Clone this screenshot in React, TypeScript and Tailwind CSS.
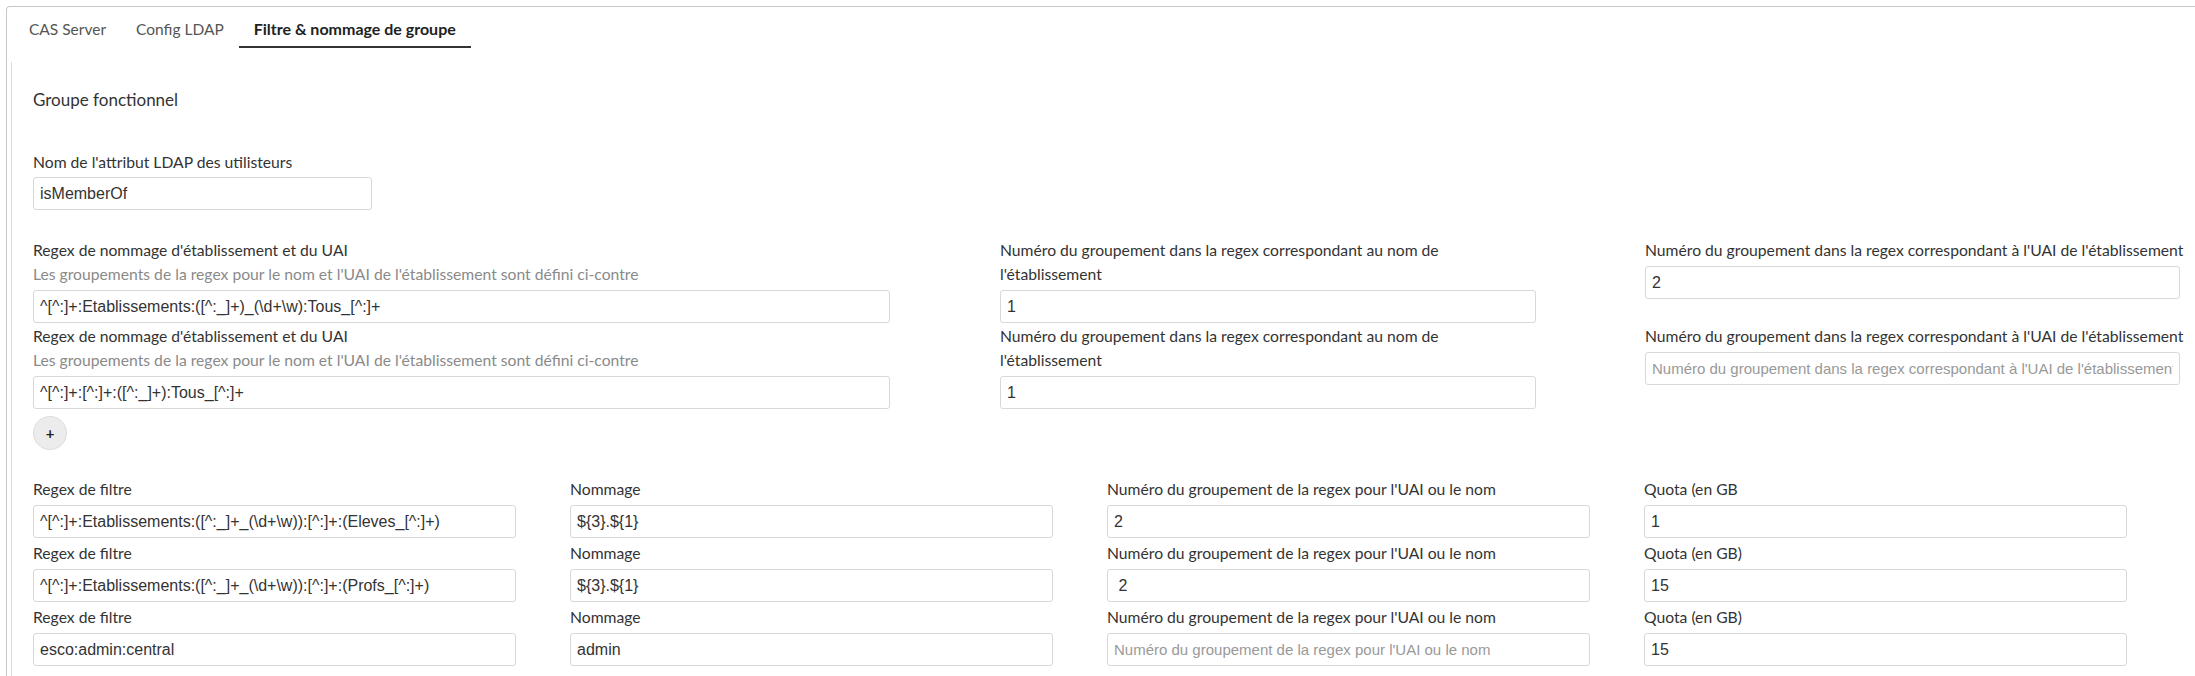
import React from "react";

const topRows = [
    {
        regex: "^[^:]+:Etablissements:([^:_]+)_(\\d+\\w):Tous_[^:]+",
        nameGroup: "1",
        uaiGroup: "2",
    },
    {
        regex: "^[^:]+:[^:]+:([^:_]+):Tous_[^:]+",
        nameGroup: "1",
        uaiGroup: "",
    },
];

const filterRows = [
    {
        filter: "^[^:]+:Etablissements:([^:_]+_(\\d+\\w)):[^:]+:(Eleves_[^:]+)",
        naming: "${3}.${1}",
        group: "2",
        quotaLabel: "Quota (en GB",
        quota: "1",
    },
    {
        filter: "^[^:]+:Etablissements:([^:_]+_(\\d+\\w)):[^:]+:(Profs_[^:]+)",
        naming: "${3}.${1}",
        group: " 2",
        quotaLabel: "Quota (en GB)",
        quota: "15",
    },
    {
        filter: "esco:admin:central",
        naming: "admin",
        group: "",
        quotaLabel: "Quota (en GB)",
        quota: "15",
    },
];

function TextInput({ value, placeholder }: { value?: string; placeholder?: string }) {
    return (
        <input
            type="text"
            defaultValue={value}
            placeholder={placeholder}
            className="block h-[33px] w-full rounded-[3px] border border-[#d8d8d8] bg-white px-[6px] font-['Liberation_Sans',Arial,sans-serif] text-[16px] text-[#333] placeholder:text-[15px] placeholder:text-[#999] outline-none"
        />
    );
}

function Label({ children }: { children: React.ReactNode }) {
    return <div className="leading-[24px] text-[15.7px] text-[#333]">{children}</div>;
}

export default function App() {
    const uaiLabel = "Numéro du groupement dans la regex correspondant à l'UAI de l'établissement";
    const groupLabel = "Numéro du groupement de la regex pour l'UAI ou le nom";

    return (
        <div className="flex min-h-screen flex-col bg-white pl-[6px] pt-[6px] font-['Lato',sans-serif]">
            <div className="flex flex-1 flex-col rounded-tl-[4px] border-l border-t border-[#c8c8c8]">
                {/* Tabs */}
                <div className="flex pl-[7px] pt-[10px] text-[15.5px] leading-[24px]">
                    <div className="px-[15px] pb-[6px] text-[#555]">CAS Server</div>
                    <div className="px-[15px] pb-[6px] text-[#555]">Config LDAP</div>
                    <div className="border-b-2 border-[#333] px-[15px] pb-[5px] text-[16px] font-bold text-[#222]">
                        Filtre &amp; nommage de groupe
                    </div>
                </div>

                {/* Panel */}
                <div className="ml-[4px] mt-[14px] flex-1 border-l border-[#dcdcdc] pl-[21px] pt-[26px]">
                    <h2 className="text-[17px] leading-[24px] text-[#333]">Groupe fonctionnel</h2>

                    <div className="mt-[38px] w-[339px]">
                        <div className="mb-[3px]">
                            <Label>Nom de l'attribut LDAP des utilisteurs</Label>
                        </div>
                        <TextInput value="isMemberOf" />
                    </div>

                    {/* Regex rows */}
                    <div className="mt-[28px]">
                        {topRows.map((row, i) => (
                            <div key={i} className="mb-[1px] flex items-start">
                                <div className="w-[857px]">
                                    <Label>Regex de nommage d'établissement et du UAI</Label>
                                    <div className="mb-[4px] text-[15.7px] leading-[24px] text-[#8a8a8a]">
                                        Les groupements de la regex pour le nom et l'UAI de l'établissement sont défini ci-contre
                                    </div>
                                    <TextInput value={row.regex} />
                                </div>
                                <div className="ml-[110px] w-[536px]">
                                    <div className="mb-[4px]">
                                        <Label>
                                            Numéro du groupement dans la regex correspondant au nom de
                                            <br />
                                            l'établissement
                                        </Label>
                                    </div>
                                    <TextInput value={row.nameGroup} />
                                </div>
                                <div className="ml-[109px] w-[535px]">
                                    <div className="mb-[4px] whitespace-nowrap">
                                        <Label>{uaiLabel}</Label>
                                    </div>
                                    <TextInput value={row.uaiGroup} placeholder={uaiLabel} />
                                </div>
                            </div>
                        ))}
                    </div>

                    <button className="mt-[7px] flex h-[34px] w-[34px] items-center justify-center rounded-full border border-[#dcdcdc] bg-[#ececec] text-[15px] font-bold text-[#222]">
                        +
                    </button>

                    {/* Filter rows */}
                    <div className="mt-[27px]">
                        {filterRows.map((row, i) => (
                            <div key={i} className="mb-[3px] grid grid-cols-[483px_483px_483px_483px] gap-x-[54px]">
                                <div>
                                    <div className="mb-[4px]">
                                        <Label>Regex de filtre</Label>
                                    </div>
                                    <TextInput value={row.filter} />
                                </div>
                                <div>
                                    <div className="mb-[4px]">
                                        <Label>Nommage</Label>
                                    </div>
                                    <TextInput value={row.naming} />
                                </div>
                                <div>
                                    <div className="mb-[4px]">
                                        <Label>{groupLabel}</Label>
                                    </div>
                                    <TextInput value={row.group} placeholder={groupLabel} />
                                </div>
                                <div>
                                    <div className="mb-[4px]">
                                        <Label>{row.quotaLabel}</Label>
                                    </div>
                                    <TextInput value={row.quota} />
                                </div>
                            </div>
                        ))}
                    </div>
                </div>
            </div>
        </div>
    );
}
